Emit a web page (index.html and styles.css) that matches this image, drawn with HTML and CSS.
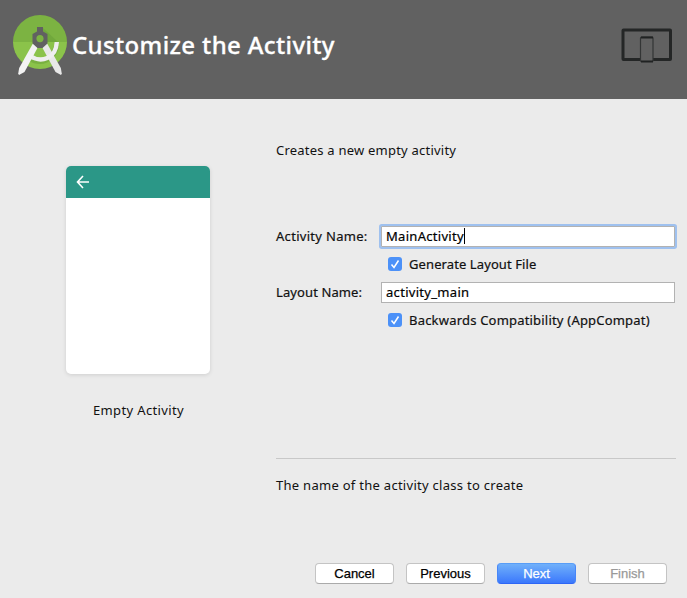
FILE: index.html
```html
<!DOCTYPE html>
<html lang="en">
<head>
<meta charset="utf-8">
<title>Customize the Activity</title>
<link rel="stylesheet" href="styles.css">
</head>
<body>
<div class="wizard">
  <header class="header">
    <svg class="logo" width="56" height="62" viewBox="12 14 56 62">
      <defs><clipPath id="disc"><circle cx="40" cy="42" r="27"/></clipPath></defs>
      <g clip-path="url(#disc)">
        <path fill="#7cb342" d="M12 14h56v28H12z"/>
        <path fill="#8bc34a" d="M12 42h56v28H12z"/>
        <path fill="#689f38" opacity=".55" d="M43 28l15 14H46l-3-5z"/>
        <path fill="#689f38" opacity=".5" d="M59 46c-1 10-9 18-19 18-4 0-8-1-11-3l3-4c8 3 17 1 22-11z"/>
      </g>
      <path fill="#e8e8e8" d="M46 41.500l-4 5.500 13.500 25 5.500 3 .8-1.500-1-5.500z"/>
      <path fill="none" stroke="#eee" stroke-width="4.400" d="M30 56c11 7 26 3 26.800-14"/>
      <path fill="#f3f3f3" d="M34 41.500l4 5.500-13.500 25-5.500 3-.8-1.500 1-5.500z"/>
      <path fill="#616161" fill-rule="evenodd" d="M37 27h6v4.500l4.500 2.500v9.500L42.500 48h-5l-5-4.500V34l4.500-2.500zM40 35a3.600 3.600 0 1 0 0 7.200 3.600 3.600 0 0 0 0-7.200z"/>
    </svg>
    <h1 class="title">Customize the Activity</h1>
    <svg class="devices" width="52" height="36" viewBox="0 0 52 36">
      <rect x="2" y="2" width="47.500" height="29.500" rx=".5" fill="none" stroke="#242626" stroke-width="3"/>
      <rect x="19.500" y="9" width="12.500" height="24.500" rx="1" fill="#616161" stroke="#333535" stroke-width="1.200"/>
      <path d="M20 9.500h12M20 33.500h12" stroke="#202222" stroke-width="2"/>
    </svg>
  </header>
  <main class="content">
    <section class="preview">
      <div class="phone">
        <div class="appbar">
          <svg width="14" height="14" viewBox="0 0 14 14" fill="none" stroke="#fff" stroke-width="1.600"><path d="M7 1L1.500 7 7 13M1.500 7H13"/></svg>
        </div>
      </div>
      <div class="caption">Empty Activity</div>
    </section>
    <section class="form">
      <p class="intro">Creates a new empty activity</p>
      <div class="field"><label for="activity">Activity Name:</label><div class="input focused" id="activity">MainActivity<i class="caret"></i></div></div>
      <div class="check"><span class="box"><svg width="14" height="14" viewBox="0 0 14 14"><path d="M3.500 7.500L6 10.500 10.500 3.500" fill="none" stroke="#fff" stroke-width="1.500"/></svg></span><span>Generate Layout File</span></div>
      <div class="field"><label class="tight" for="layout">Layout Name:</label><div class="input" id="layout">activity_main</div></div>
      <div class="check"><span class="box"><svg width="14" height="14" viewBox="0 0 14 14"><path d="M3.500 7.500L6 10.500 10.500 3.500" fill="none" stroke="#fff" stroke-width="1.500"/></svg></span><span class="wide">Backwards Compatibility (AppCompat)</span></div>
      <p class="help">The name of the activity class to create</p>
    </section>
  </main>
  <footer class="actions">
    <button class="button">Cancel</button>
    <button class="button">Previous</button>
    <button class="button primary">Next</button>
    <button class="button" disabled>Finish</button>
  </footer>
</div>
</body>
</html>
```
FILE: styles.css
```css
* { box-sizing: border-box; }
body { margin: 0; background: #ebebeb; color: #111; font: 13px/20px "Noto Sans", sans-serif; }
.wizard { width: 687px; height: 598px; display: flex; flex-direction: column; overflow: hidden; white-space: nowrap; }
.header { height: 99px; flex: none; background: #616161; display: flex; align-items: flex-start; padding: 14px 14px 0 12px; }
.logo { flex: none; }
.title { margin: 15px 0 0 4px; font-size: 24px; line-height: 32px; font-weight: 500; letter-spacing: .36px; color: #fff; -webkit-text-stroke: .3px #fff; }
.devices { margin: 14px 0 0 auto; flex: none; }
.content { flex: 1; display: flex; }
.preview { width: 276px; padding: 67px 0 0 66px; }
.phone { width: 144px; height: 208px; background: #fff; border-radius: 5px; overflow: hidden; box-shadow: 0 1px 4px rgba(0,0,0,.12); }
.appbar { height: 32px; background: #2b9787; padding: 9px 10px; display: flex; }
.caption { width: 145px; margin-top: 26px; text-align: center; letter-spacing: .37px; }
.form { width: 400px; padding-top: 41px; }
.intro { margin: 0 0 65px; letter-spacing: .22px; }
.field { display: flex; align-items: center; justify-content: space-between; height: 22px; padding-right: 1px; letter-spacing: .3px; -webkit-text-stroke: .2px currentColor; }
.tight { letter-spacing: .1px; }
.input { width: 294px; height: 21px; background: #fff; border: 1px solid #b2b2b2; padding-left: 4px; display: flex; align-items: center; color: #000; }
.focused { box-shadow: 0 0 0 2px #9fc1ef; border-radius: 1px; }
.caret { width: 1px; height: 16px; background: #000; }
.check { display: flex; align-items: center; height: 34px; padding-left: 112px; gap: 7px; letter-spacing: .1px; -webkit-text-stroke: .2px currentColor; }
.wide { letter-spacing: .2px; }
.box { width: 14px; height: 14px; border-radius: 3px; background: #4c91f8; display: flex; }
.help { margin: 121px 0 0; border-top: 1px solid #c8c8c8; padding-top: 16px; letter-spacing: .28px; }
.actions { height: 36px; flex: none; display: flex; justify-content: flex-end; gap: 12px; padding: 1px 20px 0 0; }
.button { width: 79px; height: 21px; padding: 0; border: 1px solid #c4c4c4; border-bottom-color: #aaa; border-radius: 4px; background: #fff; color: #000; font: 13px/19px "Liberation Sans", sans-serif; -webkit-text-stroke: .25px currentColor; }
.primary { background: linear-gradient(#70b0fa, #3b78fc); border-color: #589df7 #4786f8 #2e66f5; color: #fff; }
.button:disabled { color: #999; }
```
